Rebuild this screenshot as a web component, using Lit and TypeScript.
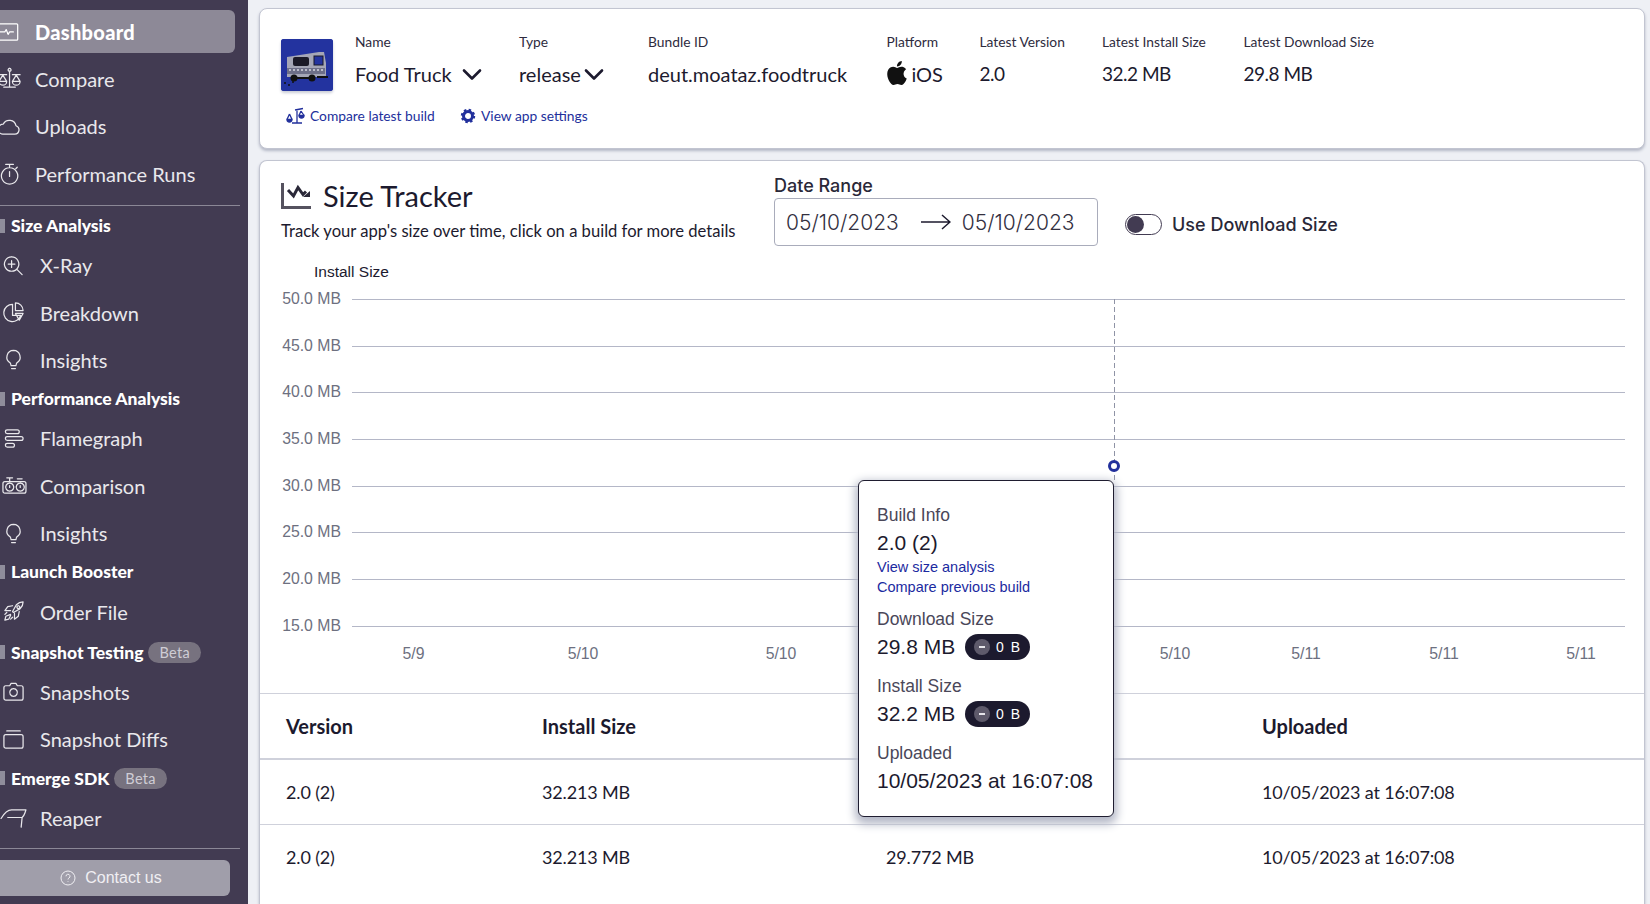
import { LitElement, html, css } from "lit";
import { customElement } from "lit/decorators.js";

const s = (d: string) => html`<svg class="ic" viewBox="0 0 24 24" fill="none" stroke="currentColor" stroke-width="1.3" stroke-linecap="round" stroke-linejoin="round"><path d=${d}></path></svg>`;

const icons: Record<string, unknown> = {
  dash: s("M-1 4H18.5a1 1 0 0 1 1 1V20a1 1 0 0 1-1 1H-1M-1 12.5H6L7.5 10 9.5 15 11 12.5H15"),
  compare: s("M0 8H8M14 8H22M11 4V21M5 21H17M11 1.500a1.500 1.500 0 1 0 .1 0M4 8.500L0 15H8ZM0 15a4 4 0 0 0 8 0M18 8.500L14 15H22ZM14 15a4 4 0 0 0 8 0"),
  cloud: s("M4 20H16.5a4.5 4.5 0 0 0 1.2-8.8A7 7 0 0 0 4.5 9.5 5.3 5.3 0 0 0 -1 14.5 5.5 5.5 0 0 0 4 20Z"),
  timer: s("M7 2.500H15M11 2.500V6M11 6a8.500 8.500 0 1 0 .1 0M11 10V15M17.500 7L19 5.500"),
  xray: s("M10 3a7.500 7.500 0 1 0 .1 0M10 7V14M6.500 10.500H13.500M15.500 16L21 21.500"),
  pie: s("M11 3.500A9 9 0 1 0 19.500 15H11ZM14 2A8 8 0 0 1 22 10H14ZM14 13H22L18 20Z"),
  bulb: s("M12 2.500A7 7 0 0 0 8.500 15.500C9.500 16.500 9 18 9.500 18.500H14.500C15 18 14.500 16.500 15.500 15.500A7 7 0 0 0 12 2.500ZM10 21.500H14"),
  flame: s("M5.500 3H16a1.500 1.500 0 0 1 0 4H5.500a1.500 1.500 0 0 1 0-3.900ZM5.500 10H20a1.500 1.500 0 0 1 0 4H5.500a1.500 1.500 0 0 1 0-3.900ZM5.500 17H11a1.500 1.500 0 0 1 0 4H5.500a1.500 1.500 0 0 1 0-3.900Z"),
  dials: s("M3 8H23a2 2 0 0 1 2 2V18a2 2 0 0 1-2 2H3a2 2 0 0 1-2-2V10a2 2 0 0 1 2-2ZM8 9.500a4.200 4.200 0 1 0 .1 0M19 9.500a4.200 4.200 0 1 0 .1 0M8 12V14M19 12V14M5 4H11M8 4V7M16 5H21"),
  rocket: s("M11 12L15 5C17 3 20 2 22 2 22 4 21 7 19 9L12 13ZM17 6a1.500 1.500 0 1 0 .1 0M11 6L6 7 3 11H9M18 12L17 17 13 20V14M9 15L4 17 3 21 7 20 9 16M5 13L3 15M11 18L9 20"),
  camera: s("M4 6H8L9.500 3.500H14.500L16 6H20a2 2 0 0 1 2 2V19a2 2 0 0 1-2 2H4a2 2 0 0 1-2-2V8a2 2 0 0 1 2-2ZM12 9a4 4 0 1 0 .1 0"),
  layers: s("M5 3H19M4 7H20a2 2 0 0 1 2 2V19a2 2 0 0 1-2 2H4a2 2 0 0 1-2-2V9a2 2 0 0 1 2-2Z"),
  reaper: s("M-1 13C2 8 6 4 10 4H25L24 7C23 10 21 12 21 12H6M21 12L20 22"),
};

type Entry = { h?: string; beta?: boolean; far?: boolean; t?: string; i?: string; active?: boolean; near?: boolean; rule?: boolean };
const nav: Entry[] = [
  { t: "Dashboard", i: "dash", active: true, near: true },
  { t: "Compare", i: "compare", near: true },
  { t: "Uploads", i: "cloud", near: true },
  { t: "Performance Runs", i: "timer", near: true },
  { rule: true },
  { h: "Size Analysis" },
  { t: "X-Ray", i: "xray" },
  { t: "Breakdown", i: "pie" },
  { t: "Insights", i: "bulb" },
  { h: "Performance Analysis" },
  { t: "Flamegraph", i: "flame" },
  { t: "Comparison", i: "dials" },
  { t: "Insights", i: "bulb" },
  { h: "Launch Booster" },
  { t: "Order File", i: "rocket" },
  { h: "Snapshot Testing", beta: true, far: true },
  { t: "Snapshots", i: "camera" },
  { t: "Snapshot Diffs", i: "layers" },
  { h: "Emerge SDK", beta: true },
  { t: "Reaper", i: "reaper" },
  { rule: true },
];

const yLabels = ["50.0 MB", "45.0 MB", "40.0 MB", "35.0 MB", "30.0 MB", "25.0 MB", "20.0 MB", "15.0 MB"];
const xLabels: [string, number][] = [["5/9", 413.5], ["5/10", 583], ["5/10", 781], ["5/10", 1175], ["5/11", 1306], ["5/11", 1444], ["5/11", 1581]];
const info = [
  ["Name", "Food Truck", "chev"],
  ["Type", "release", "chev2"],
  ["Bundle ID", "deut.moataz.foodtruck", ""],
  ["Platform", "iOS", "apple"],
  ["Latest Version", "2.0", "num"],
  ["Latest Install Size", "32.2 MB", "num"],
  ["Latest Download Size", "29.8 MB", "num"],
];
/* The download-size heading and the first row's value lie under the tooltip, so those cells stay empty. */
const rows = [
  ["2.0 (2)", "32.213 MB", "", "10/05/2023 at 16:07:08"],
  ["2.0 (2)", "32.213 MB", "29.772 MB", "10/05/2023 at 16:07:08"],
];

@customElement("app-root")
export class AppRoot extends LitElement {
  static styles = css`
    :host { display: flex; width: 1650px; height: 904px; overflow: hidden; background: #eef0f5; font-family: Lato, "Noto Sans", sans-serif; color: #1c1a2e; }
    .side { flex: 0 0 248px; height: 904px; background: #423b52; color: #f2f1f4; padding-top: 8px; box-sizing: border-box; overflow: hidden; }
    .item { height: 47.400px; display: flex; align-items: center; padding-left: 40px; font-size: 20px; position: relative; color: #e9e8ec; }
    .item .ic { position: absolute; left: 2px; top: 12px; width: 23px; height: 23px; overflow: visible; }
    .item.near { padding-left: 35px; }
    .item.near .ic { left: -1px; }
    .item.active { font-weight: 900; color: #fff; letter-spacing: 0.300px; }
    .item.active::before { content: ""; position: absolute; left: 0; right: 13px; top: 2px; bottom: 2px; background: #8d8997; border-radius: 0 6px 6px 0; }
    .item > span, .item > svg { z-index: 1; }
    .rule { height: 1px; background: #8b8796; margin: 7px 8px 8px 0; }
    .head { height: 24px; display: flex; align-items: center; margin: 3px 0 4px; padding-left: 11px; font-size: 17.500px; font-weight: 900; color: #fff; position: relative; }
    .head.far { margin-top: 5px; }
    .head::before { content: ""; position: absolute; left: 0; top: 5px; width: 5px; height: 14px; background: #8f8d9b; }
    .beta { margin-left: 5px; font-size: 14.500px; font-weight: 400; background: #77727f; color: #cfcdd5; border-radius: 11px; height: 21px; line-height: 21px; padding: 0 11px; letter-spacing: 0.300px; }
    .contact { margin: 11px 18px 0 0; height: 36px; background: #a09eaa; border-radius: 0 6px 6px 0; display: flex; align-items: center; justify-content: center; gap: 9px; font-family: "Liberation Sans", sans-serif; font-size: 16px; color: #f0eff3; padding-right: 8px; box-sizing: border-box; }
    .contact svg { width: 16px; height: 16px; }

    .main { flex: 1; min-width: 0; padding: 8px 5px 0 11px; display: flex; flex-direction: column; gap: 11px; box-sizing: border-box; height: 904px; overflow: hidden; }
    .card { background: #fff; border: 1px solid #c2c5d1; border-radius: 8px; box-shadow: 0 2px 3px #b4b8c6; box-sizing: border-box; }
    .top { height: 141px; flex: none; padding: 23px 21px 0; }
    .topRow { display: flex; align-items: flex-start; }
    .logo { flex: none; width: 52px; height: 52px; margin-top: 7px; margin-right: 22px; border-radius: 3px; background: #23339f; box-shadow: 0 2px 3px #c9ccd6; overflow: hidden; }
    .logo svg { display: block; width: 52px; height: 52px; }
    .infos { display: grid; grid-template-columns: 164px 129px 238.500px 93px 122.500px 141.500px auto; }
    .lab { font-size: 13.800px; line-height: 20px; color: #2e2b3e; white-space: nowrap; }
    .val { font-size: 20px; line-height: 28px; margin-top: 8px; display: flex; align-items: center; color: #1c1a2e; }
    .val.num { font-size: 19px; letter-spacing: -0.500px; }
    .chev { width: 22px; height: 13px; margin-left: 9px; }
    .chev.c2 { margin-left: 2px; }
    .apple { width: 24px; height: 24px; margin: -2px 3px 0 -2px; fill: #111; }
    .links { display: flex; margin: 15px 0 0 5px; color: #22309c; font-size: 13.800px; line-height: 20px; }
    .links a { display: flex; align-items: center; }
    .links a:first-child { width: 174px; }
    .links svg { width: 20px; height: 18px; margin-right: 4px; flex: none; }
    .links a + a svg { width: 16px; height: 16px; margin-right: 5px; }

    .tracker { flex: 1; position: relative; border-bottom: none; border-radius: 8px 8px 0 0; }
    .hdr { display: flex; padding: 13px 21px 0; height: 72px; box-sizing: content-box; }
    .hdrL { flex: 0 0 493px; padding-top: 4px; }
    .title { display: flex; align-items: center; font-size: 29px; line-height: 36px; gap: 11px; color: #1c1a2e; }
    .title svg { width: 31px; height: 28px; flex: none; }
    .sub { font-size: 16.600px; line-height: 22px; margin-top: 6px; color: #1c1a2e; white-space: nowrap; }
    .drLab { font-family: Inter, sans-serif; font-size: 18px; font-weight: 500; line-height: 22px; color: #2a2838; padding-top: 1px; }
    .dr { width: 324px; height: 48px; margin-top: 1px; box-sizing: border-box; border: 1px solid #a9acbb; border-radius: 4px; display: flex; align-items: center; padding-left: 11px; font-family: Inter, sans-serif; font-weight: 300; font-size: 21px; color: #33303f; }
    .dr svg { width: 30px; height: 16px; margin: 0 11px 0 22px; flex: none; }
    .tog { display: flex; align-items: center; gap: 10px; margin: 39px 0 0 27px; height: 22px; font-family: Inter, sans-serif; font-size: 18px; font-weight: 500; color: #2a2838; }
    .sw { width: 37px; height: 21px; box-sizing: border-box; border: 1px solid #423b52; border-radius: 11px; display: flex; align-items: center; padding-left: 1px; }
    .sw i { width: 17px; height: 17px; border-radius: 50%; background: #423b52; }

    .yTitle { font-family: "Liberation Sans", sans-serif; font-size: 15.500px; line-height: 16px; color: #1c1a2e; margin: 18px 0 11px 54px; }
    .chart { position: relative; font-family: "Liberation Sans", sans-serif; font-size: 15.800px; color: #6d7080; }
    .gridrow { display: flex; height: 46.700px; align-items: flex-start; }
    .gridrow.last { height: 24px; }
    .gridrow b { font-weight: 400; width: 81px; text-align: right; line-height: 16px; white-space: nowrap; }
    .gridrow u { display: block; margin: 8px 19px 0 11px; height: 1px; flex: 1; background: #b4b7c7; }
    .xAxis { position: relative; height: 16px; margin-top: 4px; line-height: 16px; }
    .xAxis span { position: absolute; transform: translateX(-50%); }
    .vline { position: absolute; left: 854px; top: 8px; width: 1px; height: 181px; background: repeating-linear-gradient(to bottom, #8f93a5 0 5px, transparent 5px 8px); }
    .dot { position: absolute; left: 848px; top: 168.500px; width: 12px; height: 12px; box-sizing: border-box; border: 3px solid #22309c; border-radius: 50%; background: #fff; }

    .tbl { margin-top: 31px; font-size: 18px; letter-spacing: -0.150px; }
    .tr { display: grid; grid-template-columns: 256px 344px 376px 1fr; padding-left: 26px; align-items: center; border-top: 1px solid #cfd1db; height: 65px; box-sizing: border-box; }
    .tr.th { font-weight: 700; height: 67px; border-bottom: 2px solid #cfd1db; font-size: 20px; letter-spacing: 0; }
    .tr.th + .tr { border-top: none; height: 64px; }

    .tip { position: absolute; left: 598px; top: 189px; width: 256px; height: 337px; box-sizing: border-box; background: #fff; border: 1.500px solid #1f1d30; border-radius: 6px; box-shadow: 0 4px 10px 3px #b3b7c6; padding: 24px 0 0 18px; font-family: "Liberation Sans", sans-serif; z-index: 5; }
    .tl { font-size: 17.500px; line-height: 20px; color: #4a4759; }
    .tv { font-size: 21px; line-height: 26px; color: #1c1a2e; margin-top: 5px; display: flex; align-items: center; gap: 10px; white-space: nowrap; }
    .tlink { font-size: 14.500px; line-height: 19.500px; color: #1b2aa0; }
    .tv + .tlink { margin-top: 2px; }
    .gap { margin-top: 12px; }
    .gap2 { margin-top: 16px; }
    .pill { display: inline-flex; align-items: center; justify-content: center; gap: 6px; width: 65px; height: 26px; border-radius: 13px; background: #1c1a2e; color: #fff; font-size: 14px; letter-spacing: 1.500px; }
    .pill i { width: 16px; height: 16px; border-radius: 50%; background: #5e5a6b; font-style: normal; display: flex; align-items: center; justify-content: center; }
    .pill i::after { content: ""; width: 6px; height: 2px; background: #e6e5ea; }
  `;

  render() {
    return html`
      <aside class="side">
        ${nav.map((n) => n.rule ? html`<div class="rule"></div>`
          : n.h ? html`<div class="head ${n.far ? "far" : ""}"><span>${n.h}</span>${n.beta ? html`<span class="beta">Beta</span>` : ""}</div>`
          : html`<div class="item ${n.near ? "near" : ""} ${n.active ? "active" : ""}">${icons[n.i!]}<span>${n.t}</span></div>`)}
        <div class="contact">
          <svg viewBox="0 0 16 16" fill="none" stroke="currentColor" stroke-width="1"><circle cx="8" cy="8" r="7"></circle><path d="M6 6.300a2 2 0 1 1 3 1.700c-.7.400-1 .8-1 1.500M8 11.300v.7"></path></svg>
          <span>Contact us</span>
        </div>
      </aside>
      <main class="main">
        <section class="card top">
          <div class="topRow">
            <div class="logo">
              <svg viewBox="0 0 52 52">
                <rect width="52" height="52" fill="#23339f"></rect>
                <path d="M6 18L38 13H43L45 24V38H6Z" fill="#a4a6b6"></path>
                <rect x="12" y="18" width="16" height="9" rx="2" fill="#1b1a28"></rect>
                <rect x="33" y="17" width="9" height="9" fill="#23339f" stroke="#1b1a28"></rect>
                <rect x="6" y="29" width="38" height="6" fill="#6d6f88"></rect>
                <path d="M8 31H42" stroke="#d6d7e0" stroke-width="1.500" stroke-dasharray="2 2"></path>
                <circle cx="13" cy="39" r="3.500" fill="#111"></circle><circle cx="31" cy="39" r="3.500" fill="#111"></circle>
                <rect x="16" y="38" width="12" height="2" fill="#111"></rect><rect x="36" y="37" width="11" height="2" fill="#111"></rect>
                <path d="M3 44h2M7 46h2M11 43h2" stroke="#111" stroke-width="1.500"></path>
              </svg>
            </div>
            <div class="infos">
              ${info.map(([l, v, k]) => html`<div>
                <div class="lab">${l}</div>
                <div class="val ${k === "num" ? "num" : ""}">
                  ${k === "apple" ? html`<svg class="apple" viewBox="0 0 24 24"><path d="M12.152 6.896c-.948 0-2.415-1.078-3.960-1.040-2.040.027-3.910 1.183-4.961 3.014-2.117 3.675-.546 9.103 1.519 12.090 1.013 1.454 2.208 3.090 3.792 3.039 1.520-.065 2.090-.987 3.935-.987 1.831 0 2.350.987 3.960.948 1.637-.026 2.676-1.480 3.676-2.948 1.156-1.688 1.636-3.325 1.662-3.415-.039-.013-3.182-1.221-3.220-4.857-.026-3.040 2.480-4.494 2.597-4.559-1.429-2.090-3.623-2.324-4.390-2.376-2-.156-3.675 1.090-4.610 1.090zM15.530 3.830c.843-1.012 1.400-2.427 1.245-3.830-1.207.052-2.662.805-3.532 1.818-.780.896-1.454 2.338-1.273 3.714 1.338.104 2.715-.688 3.559-1.701"></path></svg>` : ""}
                  <span>${v}</span>
                  ${k.startsWith("chev") ? html`<svg class="chev ${k === "chev2" ? "c2" : ""}" viewBox="0 0 22 13" fill="none" stroke="#1c1a2e" stroke-width="2.600" stroke-linecap="round" stroke-linejoin="round"><path d="M3 2.500L11 10.500 19 2.500"></path></svg>` : ""}
                </div>
              </div>`)}
            </div>
          </div>
          <div class="links">
            <a><svg viewBox="0 0 20 18" fill="none" stroke="currentColor" stroke-width="1.300"><path d="M9 3L17 1.500M11 2V16M6 16H16M3.500 7L1 12.500M3.500 7L6 12.500M15 4L13 8.500M15 4L18 8.500"></path><path d="M1 12.500a2.500 2.500 0 0 0 5 0ZM13 8.500a2.500 2.500 0 0 0 5 0Z" fill="currentColor"></path></svg><span>Compare latest build</span></a>
            <a><svg viewBox="0 0 16 16" fill="none"><circle cx="8" cy="8" r="4.500" stroke="currentColor" stroke-width="3"></circle><circle cx="8" cy="8" r="6" stroke="currentColor" stroke-width="2.400" stroke-dasharray="2.400 2.300"></circle></svg><span>View app settings</span></a>
          </div>
        </section>

        <section class="card tracker">
          <div class="hdr">
            <div class="hdrL">
              <div class="title">
                <svg viewBox="0 0 31 28" fill="none" stroke="#2a2838" stroke-width="2.600"><path d="M1.500 1V25.500H30" stroke="#55525f" stroke-width="3"></path><path d="M7 8L12.500 14 17 5.500 22 12.500 25 9.500" stroke-width="3"></path><path d="M22 15H29V9Z" fill="#2a2838" stroke="none"></path></svg>
                <span>Size Tracker</span>
              </div>
              <div class="sub">Track your app's size over time, click on a build for more details</div>
            </div>
            <div>
              <div class="drLab">Date Range</div>
              <div class="dr">
                <span>05/10/2023</span>
                <svg viewBox="0 0 30 16" fill="none" stroke="#1c1a2e" stroke-width="1.500"><path d="M0 8H29M21 1L29 8 21 15"></path></svg>
                <span>05/10/2023</span>
              </div>
            </div>
            <div class="tog"><div class="sw"><i></i></div><span>Use Download Size</span></div>
          </div>

          <div class="yTitle">Install Size</div>
          <div class="chart">
            ${yLabels.map((l, i) => html`<div class="gridrow ${i === yLabels.length - 1 ? "last" : ""}"><b>${l}</b><u></u></div>`)}
            <div class="xAxis">${xLabels.map(([l, x]) => html`<span style="left:${x - 260}px">${l}</span>`)}</div>
            <div class="vline"></div>
            <div class="dot"></div>
            <div class="tip">
              <div class="tl">Build Info</div>
              <div class="tv">2.0 (2)</div>
              <div class="tlink">View size analysis</div>
              <div class="tlink">Compare previous build</div>
              <div class="tl gap">Download Size</div>
              <div class="tv">29.8 MB <span class="pill"><i></i>0 B</span></div>
              <div class="tl gap2">Install Size</div>
              <div class="tv">32.2 MB <span class="pill"><i></i>0 B</span></div>
              <div class="tl gap2">Uploaded</div>
              <div class="tv">10/05/2023 at 16:07:08</div>
            </div>
          </div>

          <div class="tbl">
            <div class="tr th"><span>Version</span><span>Install Size</span><span></span><span>Uploaded</span></div>
            ${rows.map((r) => html`<div class="tr">${r.map((c) => html`<span>${c}</span>`)}</div>`)}
          </div>
        </section>
      </main>
    `;
  }
}
